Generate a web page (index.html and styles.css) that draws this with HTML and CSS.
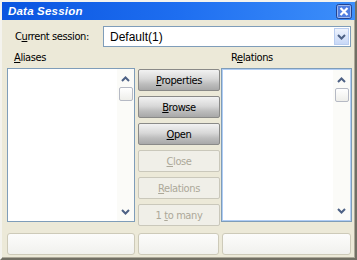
FILE: index.html
```html
<!DOCTYPE html>
<html>
<head>
<meta charset="utf-8">
<link rel="stylesheet" href="styles.css">
</head>
<body>
<div class="window">
  <div class="titlebar">
    <span class="title">Data Session</span>
    <span class="close-btn">
      <svg width="16" height="15" viewBox="0 0 16 15">
        <rect x="0.5" y="0.5" width="15" height="14" rx="2" fill="#4f7de0" stroke="#23428f"/>
        <rect x="1.5" y="1.5" width="13" height="12" rx="1" fill="none" stroke="#9cb8ee"/>
        <path d="M4.5 4 L11.5 11 M11.5 4 L4.5 11" stroke="#fff" stroke-width="2.2"/>
      </svg>
    </span>
  </div>
  <div class="content">
    <div class="session-row">
      <span class="label">C<u>u</u>rrent session:</span>
      <div class="combo">
        <span class="combo-text">Default(1)</span>
        <span class="combo-btn">
          <svg width="9" height="6" viewBox="0 0 9 6"><path d="M1 1 L4.5 4.5 L8 1" fill="none" stroke="#4d6185" stroke-width="2"/></svg>
        </span>
      </div>
    </div>
    <div class="main">
      <span class="label col-label"><u>A</u>liases</span>
      <span></span>
      <span class="label col-label rel-label">R<u>e</u>lations</span>
      <div class="list">
        <div class="list-body"></div>
        <div class="scrollbar">
          <span class="arrow"><svg width="9" height="6" viewBox="0 0 9 6"><path d="M1 5 L4.5 1.5 L8 5" fill="none" stroke="#4d6185" stroke-width="2"/></svg></span>
          <span class="thumb"></span>
          <span class="track"></span>
          <span class="arrow"><svg width="9" height="6" viewBox="0 0 9 6"><path d="M1 1 L4.5 4.5 L8 1" fill="none" stroke="#4d6185" stroke-width="2"/></svg></span>
        </div>
      </div>
      <div class="buttons">
        <span class="btn"><span><u>P</u>roperties</span></span>
        <span class="btn"><span><u>B</u>rowse</span></span>
        <span class="btn"><span><u>O</u>pen</span></span>
        <span class="btn disabled"><span><u>C</u>lose</span></span>
        <span class="btn disabled"><span><u>R</u>elations</span></span>
        <span class="btn disabled"><span>1 <u>t</u>o many</span></span>
      </div>
      <div class="list focused">
        <div class="list-body"></div>
        <div class="scrollbar">
          <span class="arrow"><svg width="9" height="6" viewBox="0 0 9 6"><path d="M1 5 L4.5 1.5 L8 5" fill="none" stroke="#4d6185" stroke-width="2"/></svg></span>
          <span class="thumb"></span>
          <span class="track"></span>
          <span class="arrow"><svg width="9" height="6" viewBox="0 0 9 6"><path d="M1 1 L4.5 4.5 L8 1" fill="none" stroke="#4d6185" stroke-width="2"/></svg></span>
        </div>
      </div>
    </div>
    <div class="bottom-row">
      <span class="pbtn w1"></span>
      <span class="pbtn w2"></span>
      <span class="pbtn w3"></span>
    </div>
  </div>
</div>
</body>
</html>
```
FILE: styles.css
```css
html, body {
  margin: 0;
  padding: 0;
  background: #ece9d8;
}
.window {
  width: 357px;
  height: 260px;
  box-sizing: border-box;
  background: #ece9d8;
  border-top: 2px solid #f4f3ee;
  border-left: 2px solid #f4f3ee;
  border-right: 2px solid #716f64;
  border-bottom: 2px solid #716f64;
  box-shadow: inset -1px -1px 0 #aca899;
  font-family: "DejaVu Sans Condensed", "DejaVu Sans", sans-serif;
  font-stretch: condensed;
  font-size: 11px;
  letter-spacing: -0.4px;
  color: #000;
  display: flex;
  flex-direction: column;
}
.titlebar {
  height: 18px;
  background: linear-gradient(to right, #0a55e0 0%, #1e6ef0 50%, #3d8ffa 100%);
  display: flex;
  align-items: center;
  justify-content: space-between;
  padding: 0 2px 0 5px;
}
.title {
  color: #fff;
  font-family: "Liberation Sans", Arial, sans-serif;
  font-stretch: normal;
  font-weight: bold;
  font-style: italic;
  font-size: 11.5px;
  letter-spacing: 0.2px;
  margin-left: 1px;
}
.close-btn {
  display: flex;
  height: 15px;
  margin-top: 1px;
  margin-right: 1px;
}
.content {
  padding: 6px 3px 0 5px;
  display: flex;
  flex-direction: column;
}
.session-row {
  display: flex;
  align-items: center;
  height: 21px;
}
.session-row .label {
  width: 96px;
  padding-left: 8px;
  box-sizing: border-box;
}
.combo {
  width: 248px;
  height: 21px;
  box-sizing: border-box;
  border: 1px solid #7f9db9;
  background: #fff;
  display: flex;
  align-items: center;
  justify-content: space-between;
  padding: 1px 1px 1px 6px;
  font-family: "Liberation Sans", Arial, sans-serif;
  font-stretch: normal;
  letter-spacing: 0;
  font-size: 12px;
}
.combo-btn {
  width: 15px;
  height: 17px;
  box-sizing: border-box;
  border: 1px solid #b9cdf0;
  background: linear-gradient(#eef3fd, #c8d8f7);
  display: flex;
  align-items: center;
  justify-content: center;
}
.main {
  display: grid;
  grid-template-columns: 128px 82px 131px;
  grid-template-rows: 21px 154px;
  column-gap: 2px;
}
.col-label {
  padding-left: 7px;
  align-self: center;
}
.rel-label {
  padding-left: 10px;
}
.list {
  border: 1px solid #7f9db9;
  background: #fff;
  display: flex;
  box-sizing: border-box;
}
.list.focused {
  border: 1px solid #7f9db9;
  box-shadow: inset 0 0 0 1px #b0cdf5;
  padding: 1px;
}
.list-body {
  flex: 1;
}
.scrollbar {
  width: 17px;
  background: #fbfbf8;
  display: flex;
  flex-direction: column;
  align-items: center;
  padding: 1px 0;
}
.arrow {
  height: 17px;
  width: 16px;
  display: flex;
  align-items: center;
  justify-content: center;
}
.thumb {
  width: 14px;
  height: 14px;
  box-sizing: border-box;
  border: 1px solid #b5b9c4;
  border-radius: 2px;
  background: linear-gradient(#fff, #eeeeea);
}
.track {
  flex: 1;
}
.buttons {
  display: flex;
  flex-direction: column;
  gap: 5px;
  padding-top: 1px;
  margin-left: 1px;
}
.btn {
  flex-shrink: 0;
  height: 22px;
  box-sizing: border-box;
  border: 1px solid #8a8a88;
  border-radius: 2px;
  background: linear-gradient(#f2f2f2 0%, #d8d8d8 45%, #bdbdbd 70%, #a8a8a8 100%);
  display: flex;
  align-items: center;
  justify-content: center;
  width: 82px;
}
.btn.disabled {
  background: #f0efe8;
  border-color: #cac8bb;
  color: #aca899;
}
.bottom-row {
  display: flex;
  margin-top: 11px;
  gap: 3px;
}
.pbtn {
  height: 22px;
  box-sizing: border-box;
  border: 1px solid #cdcab9;
  border-radius: 3px;
  background: linear-gradient(#fcfcfb, #f1f1ee);
}
.w1 { width: 128px; }
.w2 { width: 81px; }
.w3 { width: 129px; }
```
